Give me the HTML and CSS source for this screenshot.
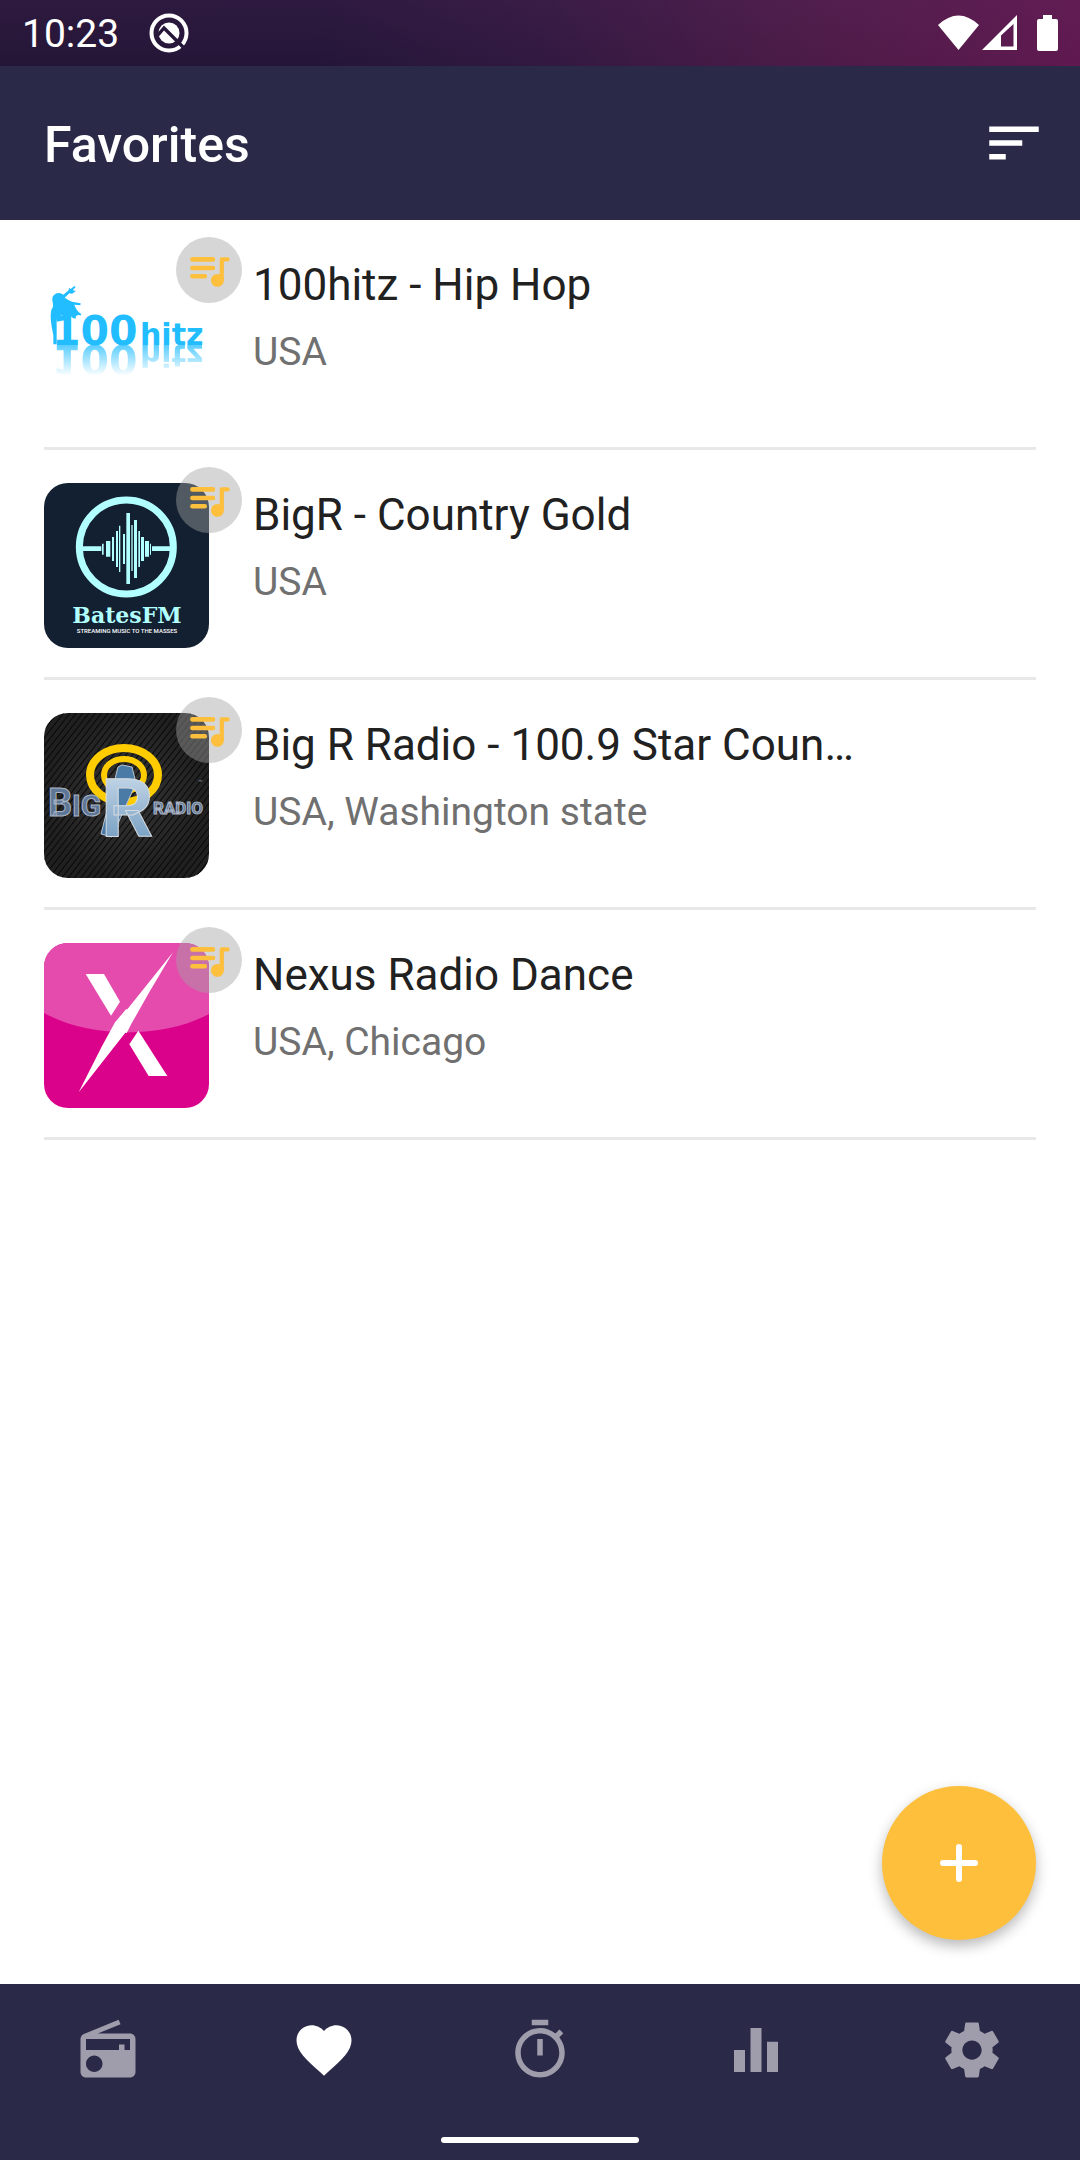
FILE: index.html
```html
<!DOCTYPE html>
<html lang="en">
<head>
  <meta charset="UTF-8" />
  <meta name="viewport" content="width=device-width, initial-scale=1.0"/>
  <title>Favorites</title>
  <link rel="stylesheet" href="styles.css">
</head>
<body>
  <!-- shared icon for the list badges -->
  <svg width="0" height="0" class="defs" aria-hidden="true">
    <symbol id="queue" viewBox="0 0 66 66">
      <g fill="none" stroke="#fdbf3c" stroke-linecap="round" stroke-linejoin="round">
        <path stroke-width="4.6" d="M16.4 22.4H37M16.4 31H37M16.4 39.2H28.8"/>
        <path stroke-width="4.2" d="M51.6 22.4H45.8V43"/>
      </g>
      <circle cx="41.4" cy="43.4" r="6.4" fill="#fdbf3c"/>
    </symbol>
  </svg>

  <div class="status">
    <span class="clock">10:23</span>
    <svg class="status-app" viewBox="0 0 40 40">
      <circle cx="20" cy="20" r="17.5" fill="none" stroke="#fff" stroke-width="4"/>
      <circle cx="20" cy="20" r="10.5" fill="#fff"/>
      <path d="M9 22L15 15L34 34" fill="none" stroke="#26173a" stroke-width="3.4"/>
    </svg>
    <svg class="status-icons" viewBox="0 0 122 36">
      <path fill="#fff" d="M0 10Q20.500 -9 41 10L20.500 35Z"/>
      <path fill="#fff" fill-rule="evenodd" d="M44 35L79 0V35ZM63 20.500V31.500H75.500V9Z"/>
      <path fill="#fff" d="M105 0H114V4H118Q120 4 120 6V34Q120 36 118 36H101Q99 36 99 34V6Q99 4 101 4H105Z"/>
    </svg>
  </div>

  <header class="topbar">
    <h1>Favorites</h1>
    <button class="icon-btn" aria-label="Sort">
      <svg viewBox="0 0 24 24"><path d="M3 18h6v-2H3v2zM3 6v2h18V6H3zm0 7h12v-2H3v2z"/></svg>
    </button>
  </header>

  <main>
    <ul class="stations">
      <li class="station">
        <div class="cover">
          <svg class="logo" viewBox="0 0 165 165">
            <defs>
              <linearGradient id="fade" gradientUnits="userSpaceOnUse" x1="0" y1="92" x2="0" y2="123">
                <stop offset="0" stop-color="#fff" stop-opacity=".75"/>
                <stop offset="1" stop-color="#fff" stop-opacity="0"/>
              </linearGradient>
              <mask id="fadeMask" maskUnits="userSpaceOnUse" x="0" y="92" width="165" height="40">
                <rect x="0" y="92" width="165" height="40" fill="url(#fade)"/>
              </mask>
            </defs>
            <g id="hitz" fill="#22bdff" class="hitz-text">
              <text x="8" y="92" font-size="41">100</text>
              <text x="96" y="92" font-size="30">hitz</text>
            </g>
            <g mask="url(#fadeMask)"><use href="#hitz" transform="translate(0 184) scale(1 -1)"/></g>
            <g transform="scale(.33333) translate(-42 -84)">
              <path fill="#22bdff" d="M133 183L137 186L128 196L138 198L126 206L118 205L104 218Q113 224 126 230L152 235L151 241L133 239Q138 256 154 268L146 282L130 280L122 274L114 276L94 270L80 284L80 358H70L70 330Q58 280 64 254Q72 246 68 232Q62 212 80 205Q92 202 100 209L116 196L117 188L122 192Z"/>
              <circle cx="146" cy="279" r="9" fill="#fff"/>
            </g>
          </svg>
          <span class="badge"><svg><use href="#queue"/></svg></span>
        </div>
        <div class="info">
          <h2>100hitz - Hip Hop</h2>
          <p>USA</p>
        </div>
      </li>

      <li class="station">
        <div class="cover">
          <svg class="logo" viewBox="0 0 165 165">
            <rect width="165" height="165" fill="#122031"/>
            <g transform="scale(.33333) translate(-42 -84)" fill="#b2ffff">
              <circle cx="289" cy="276" r="141" fill="none" stroke="#b2ffff" stroke-width="21"/>
              <path d="M155 274h59v14h-59zM366 274h60v14h-60z"/>
              <path d="M216 266h5v33h-5zM228 258h13v47h-13zM246 246h6v72h-6zM258 228h6v108h-6zM267 212h4v139h-4zM279 237h6v90h-6zM289 174h11v213h-11zM304 210h4v138h-4zM312 195h9v174h-9zM325 228h5v108h-5zM333 246h9v72h-9zM345 258h12v47h-12zM360 266h3v33h-3z"/>
            </g>
            <text class="bates" x="83" y="140" font-size="22">BatesFM</text>
            <text class="bates-sub" x="83" y="150" font-size="6">STREAMING MUSIC TO THE MASSES</text>
          </svg>
          <span class="badge"><svg><use href="#queue"/></svg></span>
        </div>
        <div class="info">
          <h2>BigR - Country Gold</h2>
          <p>USA</p>
        </div>
      </li>

      <li class="station">
        <div class="cover">
          <svg class="logo" viewBox="0 0 165 165">
            <defs>
              <radialGradient id="bigBg">
                <stop offset="0" stop-color="#353535"/>
                <stop offset="1" stop-color="#202020"/>
              </radialGradient>
              <pattern id="hatch" width="5" height="5" patternUnits="userSpaceOnUse" patternTransform="rotate(38)">
                <path d="M0 0V5" stroke="#080808" stroke-width="2"/>
              </pattern>
              <linearGradient id="steel" x1="0" y1="0" x2="0" y2="1">
                <stop offset="0" stop-color="#d3e1ee"/>
                <stop offset="1" stop-color="#6391ba"/>
              </linearGradient>
            </defs>
            <rect width="165" height="165" fill="url(#bigBg)"/>
            <rect width="165" height="165" fill="url(#hatch)"/>
            <g fill="none" stroke="#fc0">
              <ellipse cx="80" cy="62" rx="34" ry="27" stroke-width="8"/>
              <ellipse cx="80" cy="62" rx="20" ry="16" stroke-width="6"/>
            </g>
            <g class="big">
              <text x="4" y="103" font-size="38">B</text>
              <text x="28" y="103" font-size="30">IG</text>
              <text x="109" y="101" font-size="17">RADIO</text>
            </g>
            <text x="154" y="72" font-size="7" fill="#8fa3bd">™</text>
            <path d="M74 54L78 52L88 54L92 70L68 124L57 121Z" fill="#4a7aa6" stroke="#b9c6d2"/>
            <text class="big-r" x="57" y="124" font-size="82" fill="url(#steel)">R</text>
          </svg>
          <span class="badge"><svg><use href="#queue"/></svg></span>
        </div>
        <div class="info">
          <h2>Big R Radio - 100.9 Star Coun…</h2>
          <p>USA, Washington state</p>
        </div>
      </li>

      <li class="station">
        <div class="cover">
          <svg class="logo" viewBox="42 84 495 495">
            <rect x="42" y="84" width="495" height="495" fill="#db028b"/>
            <path fill="#e54bad" d="M42 84H537V297C400 371 180 371 42 294Z"/>
            <g fill="#fff">
              <path d="M167 177H222L270 260L243 302Z"/>
              <path d="M429 112L356 235L305 325L290 354L286 353L146 532L215 395L255 322L288 283L292 283Z"/>
              <path d="M325 347L412 483H356L298 388Z"/>
            </g>
          </svg>
          <span class="badge"><svg><use href="#queue"/></svg></span>
        </div>
        <div class="info">
          <h2>Nexus Radio Dance</h2>
          <p>USA, Chicago</p>
        </div>
      </li>
    </ul>
  </main>

  <footer class="bottom">
    <button class="fab" aria-label="Add station">
      <svg viewBox="0 0 38 38"><path d="M19 3V35M3 19H35"/></svg>
    </button>
    <nav class="tabs">
      <a href="#" aria-label="Radio">
        <svg viewBox="0 0 24 24"><path d="M3.240 6.150C2.510 6.430 2 7.170 2 8v12c0 1.100.89 2 2 2h16c1.110 0 2-.9 2-2V8c0-1.110-.89-2-2-2H8.300l8.260-3.340L15.880 1 3.240 6.150zM7 20c-1.660 0-3-1.340-3-3s1.340-3 3-3 3 1.340 3 3-1.340 3-3 3zm13-8h-2v-2h-2v2H4V8h16v4z"/></svg>
      </a>
      <a href="#" class="active" aria-label="Favorites">
        <svg viewBox="0 0 24 24"><path d="M12 21.350l-1.450-1.320C5.400 15.360 2 12.280 2 8.500 2 5.420 4.420 3 7.500 3c1.740 0 3.410.81 4.500 2.090C13.090 3.810 14.760 3 16.500 3 19.580 3 22 5.420 22 8.500c0 3.780-3.400 6.860-8.550 11.540L12 21.350z"/></svg>
      </a>
      <a href="#" aria-label="Timer">
        <svg viewBox="0 0 24 24"><path d="M15 1H9v2h6V1zm-4 13h2V8h-2v6zm8.030-6.610l1.420-1.420c-.43-.51-.9-.99-1.410-1.410l-1.420 1.420C16.070 4.740 14.120 4 12 4c-4.970 0-9 4.030-9 9s4.020 9 9 9 9-4.030 9-9c0-2.120-.74-4.070-1.970-5.610zM12 20c-3.870 0-7-3.130-7-7s3.130-7 7-7 7 3.130 7 7-3.130 7-7 7z"/></svg>
      </a>
      <a href="#" aria-label="Equalizer">
        <svg viewBox="0 0 24 24"><path d="M10 20h4V4h-4v16zm-6 0h4v-8H4v8zM16 9v11h4V9h-4z"/></svg>
      </a>
      <a href="#" aria-label="Settings">
        <svg viewBox="0 0 24 24"><path d="M19.430 12.980c.04-.32.07-.64.07-.98s-.03-.66-.07-.98l2.110-1.650c.19-.15.24-.42.12-.64l-2-3.460c-.12-.22-.39-.3-.61-.22l-2.490 1c-.52-.4-1.080-.73-1.690-.98l-.38-2.650C14.460 2.180 14.250 2 14 2h-4c-.25 0-.46.18-.49.42l-.38 2.650c-.61.25-1.170.59-1.690.98l-2.490-1c-.23-.09-.49 0-.61.22l-2 3.460c-.13.22-.07.49.12.64l2.110 1.650c-.04.32-.07.65-.07.98s.03.66.07.98l-2.110 1.650c-.19.15-.24.42-.12.64l2 3.460c.12.22.39.3.61.22l2.490-1c.52.4 1.080.73 1.690.98l.38 2.650c.03.24.24.42.49.42h4c.25 0 .46-.18.49-.42l.38-2.650c.61-.25 1.170-.59 1.690-.98l2.490 1c.23.09.49 0 .61-.22l2-3.460c.12-.22.07-.49-.12-.64l-2.110-1.650zM12 15.500c-1.930 0-3.500-1.570-3.500-3.500s1.570-3.500 3.500-3.500 3.500 1.570 3.500 3.500-1.570 3.500-3.500 3.500z"/></svg>
      </a>
    </nav>
    <div class="home-bar"></div>
  </footer>
</body>
</html>
```
FILE: styles.css
```css
* {
  box-sizing: border-box;
}
body {
  margin: 0;
  min-height: 100vh;
  display: flex;
  flex-direction: column;
  font-family: Roboto, sans-serif;
  background: #fff;
  color: #212121;
}
h1, h2, p, ul {
  margin: 0;
  padding: 0;
}
svg {
  display: block;
}
.defs {
  position: absolute;
}
button {
  padding: 0;
  border: none;
  background: none;
  cursor: pointer;
}

/* status bar */
.status {
  display: flex;
  align-items: center;
  height: 66px;
  padding: 0 20px 0 22px;
  color: #fff;
  background:
    linear-gradient(180deg, rgba(60, 30, 75, 0.3), rgba(20, 12, 45, 0.2)),
    linear-gradient(95deg, #281839 0%, #28183b 30%, #381c45 50%, #5a1f4e 75%, #721c58 100%);
}
.clock {
  padding-top: 2px;
  font-size: 39px;
  line-height: 46px;
}
.status-app {
  width: 40px;
  height: 40px;
  margin-left: 30px;
}
.status-icons {
  width: 122px;
  height: 36px;
  margin-left: auto;
}

/* title bar */
.topbar {
  display: flex;
  align-items: center;
  justify-content: space-between;
  height: 154px;
  padding: 0 33px 0 44px;
  background: #2a2948;
  color: #fff;
}
.topbar h1 {
  padding-top: 3px;
  font-size: 50px;
  font-weight: 500;
  line-height: 60px;
}
.icon-btn svg {
  width: 66px;
  height: 66px;
  fill: #fff;
}

/* station list */
main {
  flex: 1;
}
.stations {
  list-style: none;
  padding: 0 44px;
}
.station {
  display: flex;
  gap: 44px;
  height: 230px;
  padding-top: 33px;
  border-bottom: 3px solid #e8e8e8;
}
.cover {
  position: relative;
  flex: none;
  width: 165px;
  height: 165px;
}
.logo {
  width: 100%;
  height: 100%;
  border-radius: 24px;
}
.badge {
  position: absolute;
  top: -16px;
  right: -33px;
  width: 66px;
  height: 66px;
  border-radius: 50%;
  background: rgba(162, 162, 162, 0.44);
}
.badge svg {
  width: 66px;
  height: 66px;
}
.info {
  min-width: 0;
  padding-top: 6px;
}
.info h2 {
  font-size: 44px;
  font-weight: 400;
  line-height: 52px;
  white-space: nowrap;
  overflow: hidden;
  text-overflow: ellipsis;
}
.info p {
  margin-top: 18px;
  font-size: 39px;
  line-height: 46px;
  color: #707070;
}

/* lettering inside the station logos */
.hitz-text {
  font-family: "DejaVu Sans", sans-serif;
  font-weight: bold;
}
.bates {
  font-family: "DejaVu Serif", serif;
  font-weight: bold;
  fill: #b2ffff;
  text-anchor: middle;
}
.bates-sub {
  font-family: Roboto, sans-serif;
  font-weight: 500;
  fill: #fff;
  text-anchor: middle;
}
.big, .big-r {
  font-family: Roboto, sans-serif;
  font-weight: bold;
}
.big {
  fill: #5f7796;
  stroke: #a9b3c4;
  stroke-width: 1px;
}
.big-r {
  stroke: #d5dbe0;
  stroke-width: 1px;
}

/* bottom bar */
.bottom {
  position: relative;
  height: 176px;
  background: #2a2948;
}
.tabs {
  display: flex;
  padding-top: 33px;
}
.tabs a {
  flex: 1;
  display: flex;
  justify-content: center;
}
.tabs svg {
  width: 66px;
  height: 66px;
  fill: #9f9dac;
}
.tabs .active svg {
  fill: #fff;
}
.home-bar {
  width: 198px;
  height: 6px;
  margin: 54px auto 0;
  border-radius: 3px;
  background: #fff;
}
.fab {
  position: absolute;
  right: 44px;
  bottom: 220px;
  display: flex;
  align-items: center;
  justify-content: center;
  width: 154px;
  height: 154px;
  border-radius: 50%;
  background: #fdbf3c;
  box-shadow: 0 6px 14px rgba(0, 0, 0, 0.28);
}
.fab svg {
  width: 38px;
  height: 38px;
  fill: none;
  stroke: #fff;
  stroke-width: 6;
  stroke-linecap: round;
}
```
